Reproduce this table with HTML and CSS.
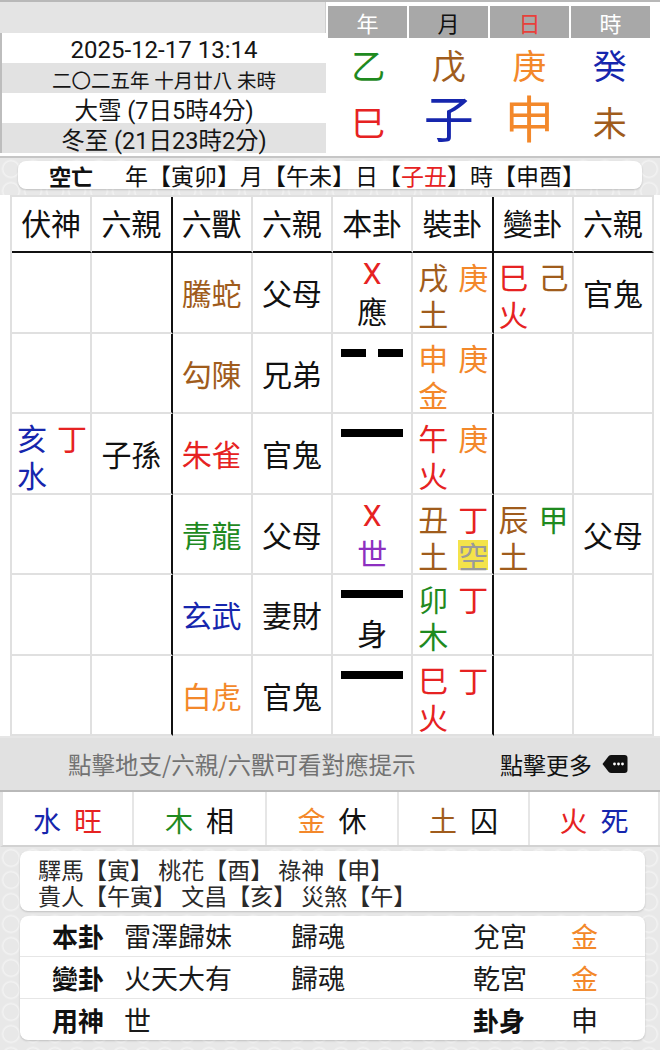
FILE: index.html
```html
<!DOCTYPE html>
<html lang="zh-Hant">
<head>
<meta charset="utf-8">
<link rel="stylesheet" href="styles.css">
</head>
<body>
<div class="top">
  <div class="date-panel">
    <div class="dp-head"></div>
    <div class="dp-rows">
      <div class="dp-row w big">2025-12-17 13:14</div>
      <div class="dp-row g small">二〇二五年 十月廿八 未時</div>
      <div class="dp-row w">大雪 (7日5時4分)</div>
      <div class="dp-row g">冬至 (21日23時2分)</div>
    </div>
  </div>
  <div class="pillars">
    <div class="p-head">
      <div class="ph">年</div>
      <div class="ph dark">月</div>
      <div class="ph red">日</div>
      <div class="ph">時</div>
    </div>
    <div class="p-row stems">
      <div class="c-green">乙</div>
      <div class="c-brown">戊</div>
      <div class="c-orange">庚</div>
      <div class="c-blue">癸</div>
    </div>
    <div class="p-row branches">
      <div class="c-red">巳</div>
      <div class="c-blue huge">子</div>
      <div class="c-orange huge">申</div>
      <div class="c-brown">未</div>
    </div>
  </div>
</div>

<div class="tex kw-area">
  <div class="kw-box"><b class="kw-label">空亡</b><span>年【寅卯】月【午未】日【<span class="c-red">子丑</span>】時【申酉】</span></div>
</div>

<div class="table-wrap">
  <div class="gua">
    <div class="th">伏神</div>
    <div class="th bk">六親</div>
    <div class="th">六獸</div>
    <div class="th">六親</div>
    <div class="th">本卦</div>
    <div class="th bk">裝卦</div>
    <div class="th">變卦</div>
    <div class="th">六親</div>

    <!-- row 1 -->
    <div class="td"></div>
    <div class="td bk"></div>
    <div class="td mid c-brown">騰蛇</div>
    <div class="td mid">父母</div>
    <div class="td yao"><div class="ln"><span class="c-red x">X</span></div><div class="ln"><span>應</span></div></div>
    <div class="td zh bk"><div class="ln"><span class="c-brown">戌</span><span class="c-orange">庚</span></div><div class="ln"><span class="c-brown">土</span></div></div>
    <div class="td zh"><div class="ln"><span class="c-red">巳</span><span class="c-brown">己</span></div><div class="ln"><span class="c-red">火</span></div></div>
    <div class="td mid">官鬼</div>

    <!-- row 2 -->
    <div class="td"></div>
    <div class="td bk"></div>
    <div class="td mid c-brown">勾陳</div>
    <div class="td mid">兄弟</div>
    <div class="td yao"><div class="ln"><div class="yin"><i></i><i></i></div></div></div>
    <div class="td zh bk"><div class="ln"><span class="c-orange">申</span><span class="c-orange">庚</span></div><div class="ln"><span class="c-orange">金</span></div></div>
    <div class="td"></div>
    <div class="td"></div>

    <!-- row 3 -->
    <div class="td zh"><div class="ln"><span class="c-blue">亥</span><span class="c-red">丁</span></div><div class="ln"><span class="c-blue">水</span></div></div>
    <div class="td mid bk">子孫</div>
    <div class="td mid c-red">朱雀</div>
    <div class="td mid">官鬼</div>
    <div class="td yao"><div class="ln"><div class="yang"></div></div></div>
    <div class="td zh bk"><div class="ln"><span class="c-red">午</span><span class="c-orange">庚</span></div><div class="ln"><span class="c-red">火</span></div></div>
    <div class="td"></div>
    <div class="td"></div>

    <!-- row 4 -->
    <div class="td"></div>
    <div class="td bk"></div>
    <div class="td mid c-green">青龍</div>
    <div class="td mid">父母</div>
    <div class="td yao"><div class="ln"><span class="c-red x">X</span></div><div class="ln"><span class="c-purple">世</span></div></div>
    <div class="td zh bk"><div class="ln"><span class="c-brown">丑</span><span class="c-red">丁</span></div><div class="ln"><span class="c-brown">土</span><span class="kong">空</span></div></div>
    <div class="td zh"><div class="ln"><span class="c-brown">辰</span><span class="c-green">甲</span></div><div class="ln"><span class="c-brown">土</span></div></div>
    <div class="td mid">父母</div>

    <!-- row 5 -->
    <div class="td"></div>
    <div class="td bk"></div>
    <div class="td mid c-blue">玄武</div>
    <div class="td mid">妻財</div>
    <div class="td yao"><div class="ln"><div class="yang"></div></div><div class="ln"><span>身</span></div></div>
    <div class="td zh bk"><div class="ln"><span class="c-green">卯</span><span class="c-red">丁</span></div><div class="ln"><span class="c-green">木</span></div></div>
    <div class="td"></div>
    <div class="td"></div>

    <!-- row 6 -->
    <div class="td"></div>
    <div class="td bk"></div>
    <div class="td mid c-orange">白虎</div>
    <div class="td mid">官鬼</div>
    <div class="td yao"><div class="ln"><div class="yang"></div></div></div>
    <div class="td zh bk"><div class="ln"><span class="c-red">巳</span><span class="c-red">丁</span></div><div class="ln"><span class="c-red">火</span></div></div>
    <div class="td"></div>
    <div class="td"></div>
  </div>
</div>

<div class="hint-bar">
  <span class="hint">點擊地支/六親/六獸可看對應提示</span>
  <span class="more">點擊更多
    <svg class="more-icon" width="26" height="20" viewBox="0 0 26 20"><path d="M0.5 10 L6.5 2.2 Q7.6 1 9.5 1 H22.5 Q25.5 1 25.5 4 V16 Q25.5 19 22.5 19 H9.5 Q7.6 19 6.5 17.8 Z" fill="#111"/><circle cx="12.5" cy="10" r="1.4" fill="#fff"/><circle cx="16.5" cy="10" r="1.4" fill="#fff"/><circle cx="20.5" cy="10" r="1.4" fill="#fff"/></svg>
  </span>
</div>

<div class="season">
  <div class="s-cell"><span class="c-blue">水</span><span class="c-red">旺</span></div>
  <div class="s-cell"><span class="c-green">木</span><span>相</span></div>
  <div class="s-cell"><span class="c-orange">金</span><span>休</span></div>
  <div class="s-cell"><span class="c-brown">土</span><span>囚</span></div>
  <div class="s-cell"><span class="c-red">火</span><span class="c-blue">死</span></div>
</div>

<div class="tex bottom-area">
  <div class="card shensha">
    <div class="ss-line">驛馬【寅】 桃花【酉】 祿神【申】</div>
    <div class="ss-line">貴人【午寅】 文昌【亥】 災煞【午】</div>
  </div>
  <div class="card info">
    <div class="info-row">
      <b>本卦</b><span>雷澤歸妹</span><span>歸魂</span><span>兌宮</span><span class="c-orange">金</span>
    </div>
    <div class="info-row">
      <b>變卦</b><span>火天大有</span><span>歸魂</span><span>乾宮</span><span class="c-orange">金</span>
    </div>
    <div class="info-row">
      <b>用神</b><span>世</span><span></span><b>卦身</b><span>申</span>
    </div>
  </div>
</div>
</body>
</html>
```

FILE: styles.css
```css
* { box-sizing: border-box; margin: 0; padding: 0; }

body {
  width: 660px;
  height: 1050px;
  overflow: hidden;
  font-family: Roboto, "Noto Sans CJK TC", sans-serif;
  color: #111;
  background: #e9e9e9;
}

.c-green { color: #1f8a1f; }
.c-brown { color: #a05c1c; }
.c-orange { color: #f3882a; }
.c-blue { color: #1626ad; }
.c-red { color: #e62222; }
.c-purple { color: #8d2fc0; }

/* ---------- top ---------- */
.top {
  display: flex;
  height: 158px;
  background: #fff;
  border-top: 2px solid #b8b8b8;
  border-bottom: 2px solid #c6c6c6;
}

.date-panel {
  width: 326px;
  display: flex;
  flex-direction: column;
}

.dp-head {
  height: 31px;
  background: #e4e4e4;
  border-right: 1px solid #cfcfcf;
}

.dp-rows {
  border-left: 2px solid #bdbdbd;
}

.dp-row {
  height: 30px;
  display: flex;
  align-items: center;
  justify-content: center;
  padding-top: 2px;
  font-size: 23.5px;
  color: #151515;
}

.dp-row.g { background: #e2e2e2; }
.dp-row.big { font-size: 24px; padding-top: 4px; }
.dp-row.small { font-size: 19.5px; }

.pillars {
  flex: 1;
  padding: 4px 10px 0 2px;
}

.p-head {
  display: grid;
  grid-template-columns: repeat(4, 1fr);
  gap: 2px;
  height: 32px;
}

.ph {
  background: #a8a8a8;
  color: #fff;
  font-size: 22px;
  display: flex;
  align-items: center;
  justify-content: center;
}

.ph.dark { color: #111; }
.ph.red { color: #e8403a; }

.p-row {
  display: grid;
  grid-template-columns: repeat(4, 1fr);
  align-items: center;
  justify-items: center;
  font-size: 34px;
}

.stems { height: 52px; }
.branches { height: 62px; }
.huge { font-size: 50px; line-height: 1; }

/* ---------- textured areas ---------- */
.tex {
  background-color: #e8e8e8;
  background-image: radial-gradient(circle, transparent 7px, rgba(255,255,255,0.45) 8px, transparent 10px);
  background-size: 22px 22px;
}

.kw-area {
  padding: 3px 18px 6px 18px;
}

.kw-box {
  height: 28px;
  background: #fff;
  border-radius: 8px;
  box-shadow: 0 1px 2px rgba(0,0,0,0.18);
  display: flex;
  align-items: center;
  font-size: 23px;
  padding-left: 31px;
}

.kw-label {
  font-weight: 700;
  font-size: 22px;
  margin-right: 32px;
}

/* ---------- table ---------- */
.table-wrap {
  background: #fff;
  padding: 0 6px 0 10px;
}

.gua {
  display: grid;
  grid-template-columns: repeat(8, 80.25px);
  grid-template-rows: 56px repeat(6, 80.5px);
  border-top: 2px solid #e0e0e0;
  border-left: 2px solid #e0e0e0;
  font-family: "Noto Sans CJK TC", sans-serif;
}

.th, .td {
  border-right: 2px solid #e0e0e0;
  border-bottom: 2px solid #e0e0e0;
}

.th {
  font-size: 30px;
  display: flex;
  align-items: center;
  justify-content: center;
  padding-bottom: 4px;
  border-bottom-color: #111;
}

.bk { border-right-color: #111; }

.td { font-size: 30px; }

.mid {
  display: flex;
  align-items: center;
  justify-content: center;
}

.ln {
  height: 37px;
  display: flex;
  align-items: center;
}

.ln span {
  display: inline-block;
  height: 37px;
  line-height: 37px;
}

.zh {
  padding: 5px 0 0 5px;
}

.zh .ln { gap: 10px; }

.yao {
  padding-top: 2px;
  display: flex;
  flex-direction: column;
  align-items: center;
}

.yao .ln { justify-content: center; }

.ln span.x {
  font-family: Roboto, sans-serif;
  font-size: 30px;
}

.yang {
  width: 62px;
  height: 8px;
  background: #000;
  margin-top: -3px;
}

.yin {
  width: 62px;
  height: 8px;
  display: flex;
  justify-content: space-between;
  margin-top: -3px;
}

.yin i {
  width: 25px;
  height: 8px;
  background: #000;
}

.ln span.kong {
  background: #f4e34a;
  color: #9a9a9a;
  height: 30px;
  line-height: 30px;
}

/* ---------- hint bar ---------- */
.hint-bar {
  height: 56px;
  background: #e1e1e1;
  border-top: 2px solid #e6e6e6;
  border-bottom: 2px solid #b9b9b9;
  display: flex;
  align-items: center;
  padding: 0 32px 0 68px;
  font-family: "Noto Sans CJK TC", sans-serif;
  font-size: 23px;
}

.hint {
  color: #727272;
  flex: 1;
  font-size: 23.5px;
}

.more {
  color: #111;
  display: flex;
  align-items: center;
  gap: 10px;
}

/* ---------- season ---------- */
.season {
  display: grid;
  grid-template-columns: 131px 133px 132px 131px 1fr;
  height: 55px;
  background: #fff;
  border-left: 3px solid #e4e4e4;
  border-bottom: 2px solid #d2d2d2;
  font-family: "Noto Sans CJK TC", sans-serif;
  font-size: 28px;
}

.s-cell {
  display: flex;
  align-items: center;
  justify-content: center;
  gap: 13px;
  padding-top: 3px;
  border-right: 2px solid #e6e6e6;
}

/* ---------- bottom ---------- */
.bottom-area {
  padding: 4px 15px 10px 20px;
  display: flex;
  flex-direction: column;
  gap: 5px;
  height: 203px;
  font-family: "Noto Sans CJK TC", sans-serif;
}

.card {
  background: #fff;
  border-radius: 8px;
  box-shadow: 0 1px 2px rgba(0,0,0,0.18);
}

.shensha {
  height: 61px;
  padding: 5px 0 0 18px;
  font-size: 23px;
  color: #2a2a2a;
}

.ss-line {
  height: 26px;
  line-height: 26px;
}

.info {
  height: 125px;
}

.info-row {
  height: 41.5px;
  display: grid;
  grid-template-columns: 72px 167px 182px 98px 1fr;
  align-items: center;
  padding-left: 32px;
  font-size: 27px;
  color: #1a1a1a;
  border-bottom: 1px solid #e6e6e6;
}

.info-row:last-child { border-bottom: none; }

.info-row b { font-weight: 700; color: #111; font-size: 26px; }
```
